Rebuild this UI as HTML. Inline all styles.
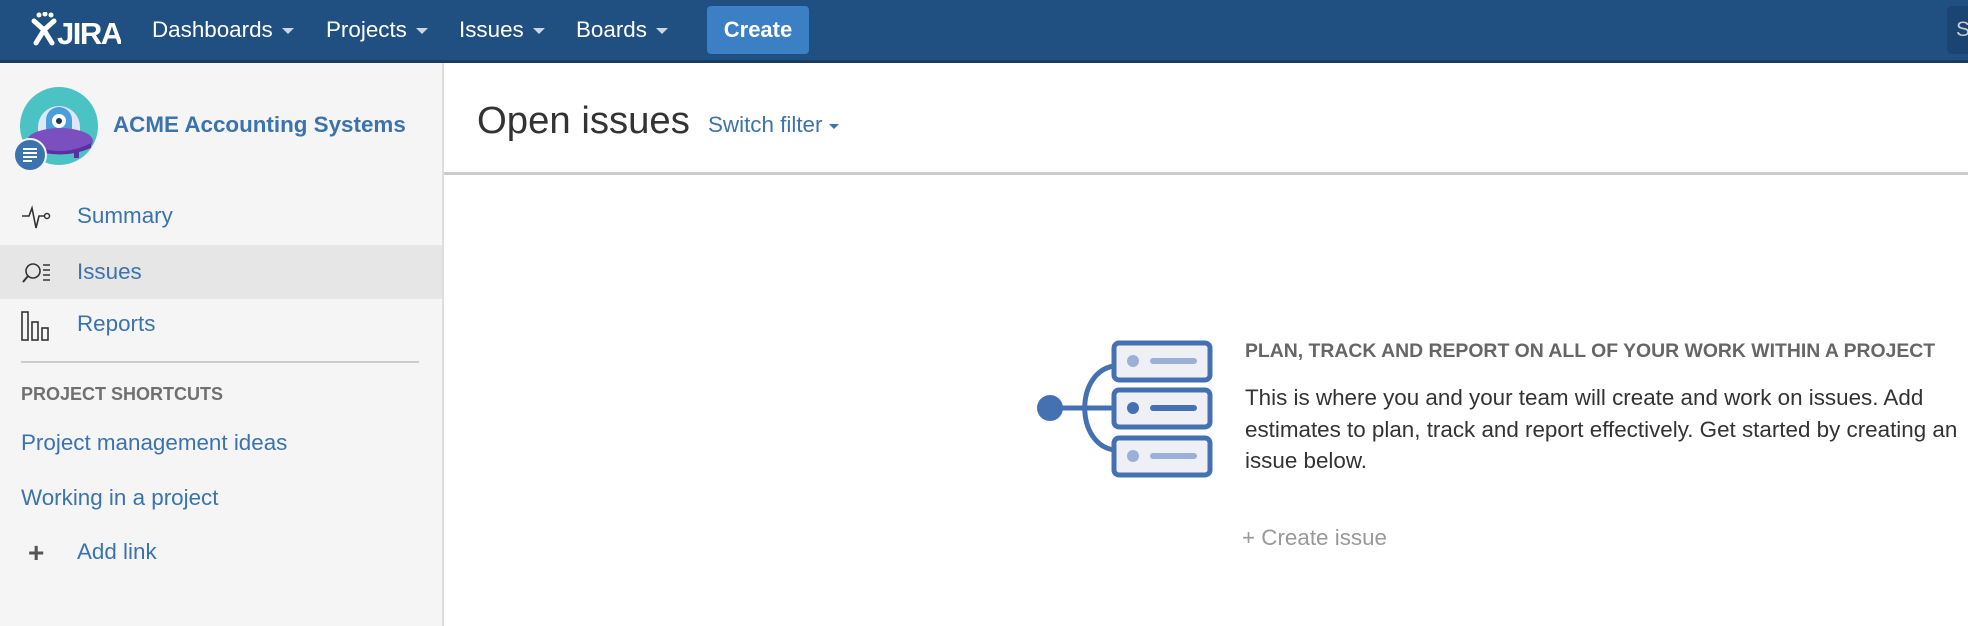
<!DOCTYPE html>
<html><head><meta charset="utf-8"><style>
*{margin:0;padding:0;box-sizing:border-box}
body{width:1968px;height:626px;overflow:hidden;font-family:"Liberation Sans",Arial,sans-serif;background:#fff;position:relative}
.nav{position:absolute;left:0;top:0;width:1968px;height:63px;background:#205081;border-bottom:3px solid #1a3c5e}
.nav .it{position:absolute;top:17px;color:#fff;font-size:22.4px}
.nav .it:after{content:"";display:inline-block;margin-left:9px;vertical-align:middle;border-left:6px solid transparent;border-right:6px solid transparent;border-top:6px solid #ccd6e3}
.create{position:absolute;left:707px;top:6px;width:102px;height:48px;background:#3b7fc4;border-radius:4px;color:#fff;font-weight:bold;font-size:22px;text-align:center;line-height:47px}
.search{position:absolute;left:1947px;top:6px;width:40px;height:48px;background:#1a4472;border-radius:5px;color:#ccc;font-size:21px;line-height:48px;padding-left:9px}
.side{position:absolute;left:0;top:63px;width:444px;height:563px;background:#f5f5f5;border-right:2px solid #ddd}
.s{position:absolute;left:77px;font-size:22.4px;color:#3b73af}
.ic{position:absolute;left:21px}
.main-h{position:absolute;left:444px;top:63px;right:0;height:112px;border-bottom:3px solid #ccc}
</style></head><body>
<div class="nav">
 <svg style="position:absolute;left:31px;top:12px" width="90" height="34" viewBox="0 0 90 34">
  <circle cx="8" cy="3" r="2.5" fill="#fff"/><circle cx="14" cy="2" r="2.5" fill="#fff"/><circle cx="20" cy="3" r="2.5" fill="#fff"/>
  <path d="M3 9 L13 18 L23 9 M13 18 L5 31 M13 18 L21 31" stroke="#fff" stroke-width="5" fill="none" stroke-linecap="round"/>
  <text x="26" y="32" fill="#fff" font-family="Liberation Sans" font-weight="bold" font-size="31" letter-spacing="-1.5">JIRA</text>
 </svg>
 <div class="it" style="left:152px">Dashboards</div>
 <div class="it" style="left:326px">Projects</div>
 <div class="it" style="left:459px">Issues</div>
 <div class="it" style="left:576px">Boards</div>
 <div class="create">Create</div>
 <div class="search">S</div>
</div>
<div class="side">
 <svg style="position:absolute;left:18px;top:24px" width="90" height="90" viewBox="0 0 90 90">
  <circle cx="41" cy="39" r="39" fill="#4bc2c4"/>
  <path d="M20 40 a21 21 0 0 1 42 0 v10 h-42z" fill="#dfe6f5"/>
  <rect x="28" y="20" width="26" height="34" rx="13" fill="#4a9fd8"/>
  <circle cx="41" cy="34" r="7" fill="#fff"/><circle cx="41" cy="34" r="3" fill="#1d3557"/>
  <ellipse cx="42" cy="54" rx="33" ry="13" fill="#7b4fc0"/>
  <path d="M11 56 q31 16 62 0 v5 q-31 13 -62 0z" fill="#5b2fa0"/>
  <rect x="56" y="62" width="5" height="9" fill="#5b2fa0"/>
 </svg>
 <svg style="position:absolute;left:13px;top:75px" width="34" height="34" viewBox="0 0 34 34">
  <circle cx="17" cy="17" r="16" fill="#3b73af" stroke="#f5f5f5" stroke-width="2"/>
  <path d="M10 11h14M10 15h14M10 19h14M10 23h9" stroke="#fff" stroke-width="2"/>
 </svg>
 <div style="position:absolute;left:113px;top:49px;font-size:22.4px;font-weight:bold;color:#3b73af">ACME Accounting Systems</div>
 <svg class="ic" style="top:140px" width="32" height="30" viewBox="0 0 32 30"><path d="M1 13h7l3-8 4 20 3-12h5" stroke="#333" stroke-width="1.6" fill="none"/><circle cx="26" cy="13" r="2.5" stroke="#333" stroke-width="1.5" fill="none"/></svg>
 <div class="s" style="top:140px">Summary</div>
 <div style="position:absolute;left:0;top:182px;width:442px;height:54px;background:#e6e6e6"></div>
 <svg class="ic" style="top:196px" width="32" height="28" viewBox="0 0 32 28"><circle cx="12" cy="12" r="7" stroke="#333" stroke-width="1.6" fill="none"/><path d="M7 17 L2 23" stroke="#333" stroke-width="2"/><path d="M22 6h7M22 11h7M22 16h7M22 21h7" stroke="#333" stroke-width="1.4"/></svg>
 <div class="s" style="top:196px">Issues</div>
 <svg class="ic" style="top:247px" width="32" height="34" viewBox="0 0 32 34"><rect x="1" y="2" width="6" height="28" stroke="#333" stroke-width="1.6" fill="none"/><rect x="11" y="12" width="6" height="18" stroke="#333" stroke-width="1.6" fill="none"/><rect x="21" y="18" width="6" height="12" stroke="#333" stroke-width="1.6" fill="none"/></svg>
 <div class="s" style="top:248px">Reports</div>
 <div style="position:absolute;left:21px;top:298px;width:398px;height:2px;background:#ccc"></div>
 <div style="position:absolute;left:21px;top:321px;font-size:18px;font-weight:bold;color:#707070">PROJECT SHORTCUTS</div>
 <div class="s" style="left:21px;top:367px">Project management ideas</div>
 <div class="s" style="left:21px;top:422px">Working in a project</div>
 <div style="position:absolute;left:28px;top:474px;font-size:28px;font-weight:bold;color:#555">+</div>
 <div class="s" style="top:476px">Add link</div>
</div>
<div class="main-h">
 <div style="position:absolute;left:33px;top:36px;font-size:38.3px;color:#333">Open issues</div>
 <div style="position:absolute;left:264px;top:49px;font-size:22.4px;color:#3b73af">Switch filter <span style="display:inline-block;vertical-align:middle;border-left:5px solid transparent;border-right:5px solid transparent;border-top:5px solid #3b73af"></span></div>
</div>
<svg style="position:absolute;left:1030px;top:335px" width="190" height="150" viewBox="1030 335 190 150">
 <path d="M1114 366 C1075 372 1075 444 1114 450" stroke="#4571b3" stroke-width="5" fill="none"/>
 <line x1="1050" y1="408" x2="1113" y2="408" stroke="#4571b3" stroke-width="5"/>
 <circle cx="1050" cy="408" r="13" fill="#4571b3"/>
 <rect x="1114" y="343" width="96" height="37" rx="5" fill="#eef0f6" stroke="#4571b3" stroke-width="5"/>
 <rect x="1114" y="390" width="96" height="37" rx="5" fill="#eef0f6" stroke="#4571b3" stroke-width="5"/>
 <rect x="1114" y="438" width="96" height="37" rx="5" fill="#eef0f6" stroke="#4571b3" stroke-width="5"/>
 <circle cx="1133" cy="361" r="6" fill="#9ab0d8"/><line x1="1153" y1="361" x2="1194" y2="361" stroke="#9ab0d8" stroke-width="6" stroke-linecap="round"/>
 <circle cx="1133" cy="408" r="6" fill="#4571b3"/><line x1="1153" y1="408" x2="1194" y2="408" stroke="#4571b3" stroke-width="6" stroke-linecap="round"/>
 <circle cx="1133" cy="456" r="6" fill="#9ab0d8"/><line x1="1153" y1="456" x2="1194" y2="456" stroke="#9ab0d8" stroke-width="6" stroke-linecap="round"/>
</svg>
<div style="position:absolute;left:1245px;top:340px;font-size:19.4px;font-weight:bold;color:#666;white-space:nowrap">PLAN, TRACK AND REPORT ON ALL OF YOUR WORK WITHIN A PROJECT</div>
<div style="position:absolute;left:1245px;top:382px;font-size:22.4px;line-height:31.5px;color:#333;white-space:nowrap">This is where you and your team will create and work on issues. Add<br>estimates to plan, track and report effectively. Get started by creating an<br>issue below.</div>
<div style="position:absolute;left:1242px;top:525px;font-size:22.4px;color:#999">+ Create issue</div>
</body></html>
